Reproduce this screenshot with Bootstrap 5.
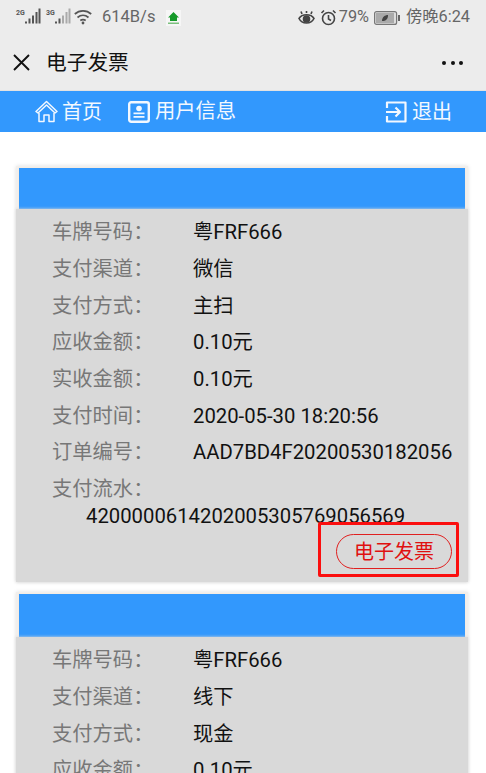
<!DOCTYPE html>
<html lang="zh">
<head>
<meta charset="utf-8">
<title>电子发票</title>
<link href="https://cdn.jsdelivr.net/npm/bootstrap@5.3.0/dist/css/bootstrap.min.css" rel="stylesheet">
<style>
html,body{height:773px;overflow:hidden;background:#fff}
body{font-family:"Roboto","Noto Sans CJK SC",sans-serif;color:#111}
.status-strip{height:35px;background:#ececec;color:#666;font-size:16.3px;padding:0 16px 0 15px}
.status-strip svg{display:block}
.wifi-glyph{margin-left:3px;margin-bottom:2px}
.rate-text{margin-left:10px;font-size:16.500px}
.app-glyph{margin-left:11px}
.eye-glyph{margin-right:5px}
.battery-glyph{margin:0 6px 0 5px}
.title-strip{height:56px;background:#ececec;padding:0 23px 0 13px;color:#111;border-bottom:1px solid #e2e2e2}
.title-text{font-size:20.700px;line-height:1;margin:2px 0 0 16px;font-weight:400}
.dots{display:flex;gap:4.500px}
.dots i{display:block;width:4px;height:4px;border-radius:50%;background:#111}
.top-nav{height:41px;background:#3298fd;color:#f3f8ff;font-size:20px;padding:0 34px 0 35px}
.top-nav .tab{display:flex;align-items:center;gap:4px;line-height:1}
.tab-info{font-size:20.300px}
.tab-second{margin-left:2px}
.page-body{padding:34px 18px 0 16px}
.slip{background:#f1efed;box-shadow:0 0 4px #dedede;position:relative;padding-top:2px}
.slip + .slip{margin-top:10px}
.slip-head{height:41px;background:#3298fd;margin:0 3px;box-shadow:0 0 0 1px #f4ece4}
.slip + .slip .slip-head{height:43px}
.slip-main{background:#d9d9d9;box-shadow:0 0 3px #d9d9d9;padding:5px 14px 0 36px;height:373px}
.slip-row{display:flex;height:36.700px;align-items:center;font-size:20.300px;white-space:nowrap}
.slip-label{width:141px;color:#777;flex:none}
.slip-val{color:#111}
.serial{font-size:20.300px;line-height:1;color:#111;padding-left:34px;margin-top:-2px;white-space:nowrap;height:19px}
.invoice-wrap{margin-top:9.500px;padding-right:2px}
.invoice-pill{border:1.500px solid #e02020;border-radius:18px;color:#e01010;background:transparent;font-size:20px;line-height:1;width:116px;height:35px;padding:0;margin:0}
.invoice-pill:hover{color:#e01010;border-color:#e02020}
.mark-box{position:absolute;left:302px;top:356px;width:141px;height:55px;border:3px solid #fb0f0f;border-radius:2px;pointer-events:none}
</style>
</head>
<body>
<div class="status-strip d-flex align-items-center justify-content-between">
  <div class="d-flex align-items-center">
    <svg width="26" height="20" viewBox="0 0 26 20"><text x="1" y="6.500" font-size="7" font-family="Roboto" font-weight="700" fill="#555">2G</text><g fill="#555"><rect x="10" y="13.500" width="2" height="2"/><rect x="13.500" y="10.500" width="2" height="5"/><rect x="17" y="7.500" width="2" height="8"/><rect x="20.500" y="4" width="2" height="11.500"/><rect x="23.500" y=".5" width="2" height="15"/></g></svg>
    <svg class="ms-1" width="26" height="20" viewBox="0 0 26 20"><text x="1" y="6.500" font-size="7" font-family="Roboto" font-weight="700" fill="#555">3G</text><g fill="#555"><rect x="10" y="13.500" width="2" height="2"/><rect x="13.500" y="10.500" width="2" height="5"/></g><g fill="#aaa"><rect x="17" y="7.500" width="2" height="8"/><rect x="20.500" y="4" width="2" height="11.500"/><rect x="23.500" y=".5" width="2" height="15"/></g></svg>
    <svg class="wifi-glyph" width="18" height="16" viewBox="0 0 18 16" fill="none" stroke="#555" stroke-width="1.700"><path d="M.8 5C5.500.8 12.500.8 17.200 5"/><path d="M3.500 8.500c3.300-2.800 7.700-2.800 11 0"/><path d="M6.300 11.500c1.800-1.300 3.600-1.300 5.400 0"/><circle cx="9" cy="14" r="1.400" fill="#555" stroke="none"/></svg>
    <span class="rate-text">614B/s</span>
    <svg class="app-glyph" width="15" height="16" viewBox="0 0 15 16"><rect width="15" height="16" fill="#f6f6f6"/><path d="M7.500 2 13 7.500H11V11H4V7.500H2Z" fill="#169a2a"/><rect x="2" y="12.500" width="11" height="1.500" fill="#7cc07e"/></svg>
  </div>
  <div class="d-flex align-items-center">
    <svg class="eye-glyph" width="17" height="16" viewBox="0 0 17 16" fill="none" stroke="#444" stroke-width="1.600"><path d="M1 8.500C4 3.500 13 3.500 16 8.500 13 14.500 4 14.500 1 8.500Z"/><circle cx="8.500" cy="9" r="3" fill="#444"/><path d="M4 4 3 1.500M8.500 3V1M13 4l1-2.500"/></svg>
    <svg width="17" height="17" viewBox="0 0 17 17" fill="none" stroke="#444" stroke-width="1.600"><circle cx="8.500" cy="9.500" r="6"/><path d="M8.500 6v4l2.500 1.500M1.500 4 4 1.500M15.500 4 13 1.500"/></svg>
    <span style="margin-left:2px">79%</span>
    <svg class="battery-glyph" width="26" height="14" viewBox="0 0 26 14"><rect x=".6" y=".6" width="22" height="12.800" rx="2" fill="#ddd" stroke="#777" stroke-width="1.200"/><rect x="2" y="2" width="18" height="10" fill="#aaa"/><path d="M8 10C8 6 11 4 14 4 14 8 12 10 8 10Z" fill="#444"/><rect x="24" y="4" width="2" height="6" fill="#666"/></svg>
    <span>傍晚6:24</span>
  </div>
</div>
<div class="title-strip d-flex align-items-center justify-content-between">
  <div class="d-flex align-items-center">
    <svg width="17" height="17" viewBox="0 0 17 17" fill="none" stroke="#111" stroke-width="1.900"><path d="M1 1 16 16M16 1 1 16"/></svg>
    <span class="title-text">电子发票</span>
  </div>
  <div class="dots"><i></i><i></i><i></i></div>
</div>
<nav class="top-nav d-flex align-items-center justify-content-between">
  <div class="d-flex align-items-center gap-4">
    <div class="tab">
      <svg width="23" height="23" viewBox="0 0 23 23" fill="none" stroke="#f3f8ff" stroke-width="1.500" stroke-linejoin="round"><path d="M1 11.500 11.500 1.500 22 11.500 20 13 11.500 5 3 13Z"/><path d="M4 13V21.500H9V15H14V21.500H19V13"/></svg>
      <span>首页</span>
    </div>
    <div class="tab tab-second" style="gap:5px">
      <svg width="22" height="22" viewBox="0 0 22 22"><rect x="1.200" y="1.200" width="19.600" height="19.600" rx="2" fill="none" stroke="#f3f8ff" stroke-width="2.400"/><circle cx="11" cy="7.500" r="2.800" fill="#f3f8ff"/><path d="M5.500 11.500H16.500V13.200H5.500ZM5.500 15H16.500V16.700H5.500Z" fill="#f3f8ff"/></svg>
      <span class="tab-info">用户信息</span>
    </div>
  </div>
  <div class="tab" style="gap:5px">
    <svg width="22" height="22" viewBox="0 0 22 22" fill="none" stroke="#f3f8ff" stroke-width="2.200" stroke-linejoin="round"><path d="M2 7V1.500H20.500V20.500H2V15"/><path d="M1 11H14.500M10.500 6.500 15 11 10.500 15.500"/></svg>
    <span>退出</span>
  </div>
</nav>
<main class="page-body">
  <section class="slip">
    <div class="slip-head"></div>
    <div class="slip-main">
      <div class="slip-row"><span class="slip-label">车牌号码：</span><span class="slip-val">粤FRF666</span></div>
      <div class="slip-row"><span class="slip-label">支付渠道：</span><span class="slip-val">微信</span></div>
      <div class="slip-row"><span class="slip-label">支付方式：</span><span class="slip-val">主扫</span></div>
      <div class="slip-row"><span class="slip-label">应收金额：</span><span class="slip-val">0.10元</span></div>
      <div class="slip-row"><span class="slip-label">实收金额：</span><span class="slip-val">0.10元</span></div>
      <div class="slip-row"><span class="slip-label">支付时间：</span><span class="slip-val">2020-05-30 18:20:56</span></div>
      <div class="slip-row"><span class="slip-label">订单编号：</span><span class="slip-val">AAD7BD4F20200530182056</span></div>
      <div class="slip-row"><span class="slip-label">支付流水：</span></div>
      <div class="serial">4200000614202005305769056569</div>
      <div class="invoice-wrap d-flex justify-content-end"><button type="button" class="btn invoice-pill">电子发票</button></div>
    </div>
    <div class="mark-box"></div>
  </section>
  <section class="slip">
    <div class="slip-head"></div>
    <div class="slip-main">
      <div class="slip-row"><span class="slip-label">车牌号码：</span><span class="slip-val">粤FRF666</span></div>
      <div class="slip-row"><span class="slip-label">支付渠道：</span><span class="slip-val">线下</span></div>
      <div class="slip-row"><span class="slip-label">支付方式：</span><span class="slip-val">现金</span></div>
      <div class="slip-row"><span class="slip-label">应收金额：</span><span class="slip-val">0.10元</span></div>
    </div>
  </section>
</main>
<script src="https://cdn.jsdelivr.net/npm/bootstrap@5.3.0/dist/js/bootstrap.bundle.min.js"></script>
</body>
</html>
